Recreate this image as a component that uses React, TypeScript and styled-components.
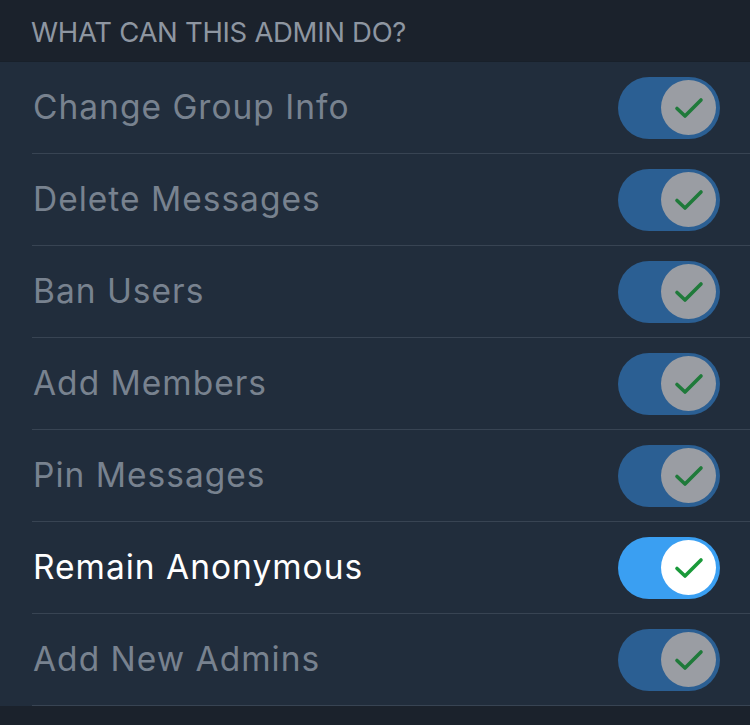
import React from "react";
import styled, { createGlobalStyle } from "styled-components";

const Global = createGlobalStyle`
  html, body { margin: 0; padding: 0; background: #1b222c; }
  body { font-family: Inter, "Noto Sans", sans-serif; }
`;

const Page = styled.div`
  width: 750px;
  height: 725px;
  background: #1b222c;
  overflow: hidden;
`;

const Header = styled.div`
  height: 62px;
  padding-left: 31px;
  display: flex;
  align-items: center;
  color: #8e96a1;
  font-size: 27.5px;
  letter-spacing: -0.3px;
  box-sizing: border-box;
  padding-top: 2px;
  border-bottom: 1px solid #18202a;
`;

const List = styled.div`
  background: #212d3c;
  padding-left: 32px;
`;

const Row = styled.div`
  height: 92px;
  box-sizing: border-box;
  display: flex;
  align-items: center;
  justify-content: space-between;
  padding-right: 30px;
  border-bottom: 1px solid #384453;
`;

const Label = styled.span<{ $active: boolean }>`
  font-size: 33.5px;
  letter-spacing: 1px;
  color: ${(p) => (p.$active ? "#ffffff" : "#78828f")};
  padding-left: 1px;
  padding-bottom: 1px;
`;

const Track = styled.div<{ $active: boolean }>`
  width: 102px;
  height: 62px;
  border-radius: 31px;
  background: ${(p) => (p.$active ? "#3a9ff2" : "#2b5f93")};
  display: flex;
  align-items: center;
  justify-content: flex-end;
  padding-right: 4px;
  box-sizing: border-box;
`;

const Knob = styled.div<{ $active: boolean }>`
  width: 55px;
  height: 55px;
  border-radius: 50%;
  background: ${(p) => (p.$active ? "#ffffff" : "#9a9da3")};
  display: flex;
  align-items: center;
  justify-content: center;
`;

const Check = ({ active }: { active: boolean }) => (
  <svg width="30" height="24" viewBox="0 0 30 24">
    <path
      d="M3 12.5 L11 20 L27 4"
      fill="none"
      stroke={active ? "#1a9a3a" : "#1f7a3a"}
      strokeWidth="3.6"
      strokeLinecap="round"
      strokeLinejoin="round"
    />
  </svg>
);

const items = [
  { label: "Change Group Info", active: false },
  { label: "Delete Messages", active: false },
  { label: "Ban Users", active: false },
  { label: "Add Members", active: false },
  { label: "Pin Messages", active: false },
  { label: "Remain Anonymous", active: true },
  { label: "Add New Admins", active: false },
];

export default function App() {
  return (
    <Page>
      <Global />
      <Header>WHAT CAN THIS ADMIN DO?</Header>
      <List>
        {items.map((it) => (
          <Row key={it.label}>
            <Label $active={it.active}>{it.label}</Label>
            <Track $active={it.active}>
              <Knob $active={it.active}>
                <Check active={it.active} />
              </Knob>
            </Track>
          </Row>
        ))}
      </List>
    </Page>
  );
}
